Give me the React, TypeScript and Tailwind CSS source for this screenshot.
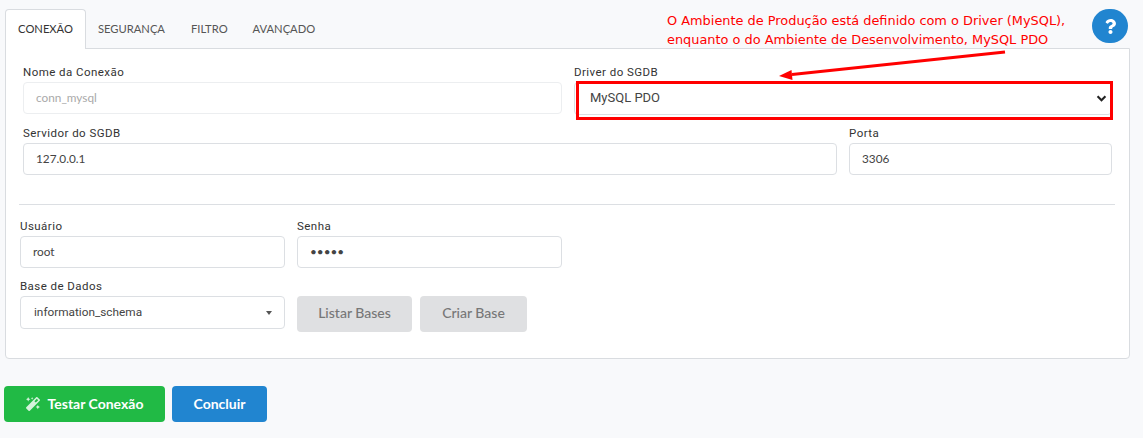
import React from 'react';
import { FaMagic, FaQuestion } from 'react-icons/fa';

const Field: React.FC<{ label: string; className?: string; children: React.ReactNode }> = ({ label, className, children }) => (
  <div className={className}>
    <label className="block h-[19px] font-['Roboto',sans-serif] text-[11.5px] leading-[19px] font-normal tracking-[0.45px] text-[#333]">{label}</label>
    {children}
  </div>
);

const inputClass = "block w-full h-[32px] px-[12px] pb-[2px] bg-white border border-[#dcdfe3] rounded-[4px] font-['Lato',sans-serif] text-[11.8px] text-[#444] outline-none";

const App: React.FC = () => {
  return (
    <div className="relative w-[1143px] h-[438px] overflow-hidden bg-[#f8f9fb] pt-[9px] pl-[5px]">
      {/* tabs */}
      <div className="flex h-[40px] font-['Lato',sans-serif] text-[11.2px] text-[#555]">
        <div className="relative z-10 w-[81px] h-[40px] flex items-center justify-center bg-white border border-b-0 border-[#d9dce0] rounded-t-[4px] text-[#333]">CONEXÃO</div>
        <div className="ml-[12px] flex items-center">SEGURANÇA</div>
        <div className="ml-[26px] flex items-center">FILTRO</div>
        <div className="ml-[25px] flex items-center">AVANÇADO</div>
      </div>

      {/* panel */}
      <div className="w-[1125px] h-[311px] -mt-px bg-white border border-[#d9dce0] rounded-b-[4px] pt-[14px] pl-[17px] pr-[17px]">
        <div className="flex gap-[12px]">
          <Field label="Nome da Conexão" className="w-[539px]">
            <input readOnly value="conn_mysql" className={`${inputClass} border-[#eceef0] text-[#aaa]`} />
          </Field>
          <Field label="Driver do SGDB" className="w-[538px]">
            <div className="flex items-center justify-between h-[33px] pl-[15px] pr-[4px] pb-[1px] bg-white border border-[#dcdfe3] rounded-[4px] font-['Roboto',sans-serif] text-[13px] text-[#444]">
              MySQL PDO
              <svg width="11" height="7" viewBox="0 0 12 8" fill="none" stroke="#222" strokeWidth="2.4"><path d="M1.5 1.5 6 6l4.5-4.5" /></svg>
            </div>
          </Field>
        </div>
        <div className="flex gap-[12px] mt-[9px]">
          <Field label="Servidor do SGDB" className="w-[814px]">
            <input readOnly value="127.0.0.1" className={inputClass} />
          </Field>
          <Field label="Porta" className="w-[263px]">
            <input readOnly value="3306" className={inputClass} />
          </Field>
        </div>

        <div className="h-px w-[1096px] bg-[#dcdfe3] -ml-[4px] mt-[29px]" />

        <div className="flex gap-[12px] mt-[12px] -ml-[3px]">
          <Field label="Usuário" className="w-[265px]">
            <input readOnly value="root" className={inputClass} />
          </Field>
          <Field label="Senha" className="w-[265px]">
            <input readOnly type="password" value="12345" className={inputClass} />
          </Field>
        </div>
        <div className="flex gap-[12px] mt-[9px] -ml-[3px]">
          <Field label="Base de Dados" className="w-[265px]">
            <div className="flex items-center justify-between h-[33px] pl-[13px] pr-[12px] bg-white border border-[#dcdfe3] rounded-[4px] font-['Roboto',sans-serif] text-[11.8px] text-[#444]">
              information_schema
              <span className="w-0 h-0 border-x-[3.5px] border-x-transparent border-t-[4px] border-t-[#555]" />
            </div>
          </Field>
          <div className="flex gap-[8px] pt-[19px]">
            <button className="w-[115px] h-[36px] pb-[3px] bg-[#dfe0e2] rounded-[4px] font-['Lato',sans-serif] text-[14px] font-medium text-[#777]">Listar Bases</button>
            <button className="w-[107px] h-[36px] pb-[3px] bg-[#dfe0e2] rounded-[4px] font-['Lato',sans-serif] text-[14px] font-medium text-[#777]">Criar Base</button>
          </div>
        </div>
      </div>

      {/* actions */}
      <div className="flex gap-[7px] mt-[27px] -ml-px font-['Lato',sans-serif] text-[14px] font-bold text-white">
        <button className="flex items-center justify-center gap-[8px] w-[161px] h-[36px] pb-[1px] bg-[#21ba45] rounded-[4px]">
          <FaMagic size={14} className="text-[#d5f3dc]" />
          Testar Conexão
        </button>
        <button className="w-[95px] h-[36px] pb-[1px] bg-[#2185d0] rounded-[4px]">Concluir</button>
      </div>

      {/* help button */}
      <div className="absolute left-[1092px] top-[9px] w-[36px] h-[34px] rounded-full bg-[#2185d0] flex items-center justify-center text-white">
        <FaQuestion size={15} />
      </div>

      {/* annotation over the screenshot */}
      <div className="absolute left-[667px] top-[11px] font-['DejaVu_Sans',sans-serif] text-[12.9px] leading-[19px] text-[#ff0000] whitespace-nowrap">
        <p>O Ambiente de Produção está definido com o Driver (MySQL),</p>
        <p>enquanto o do Ambiente de Desenvolvimento, MySQL PDO</p>
      </div>
      <div className="absolute left-[576px] top-[81px] w-[537px] h-[39px] border-[3px] border-[#ff0000]" />
      <svg className="absolute left-[770px] top-[45px]" width="245" height="36" viewBox="0 0 245 36">
        <path d="M235 7 22 29.6" stroke="#ff0000" strokeWidth="3" />
        <path d="M9 31 21.5 25 22.5 35z" fill="#ff0000" />
      </svg>
    </div>
  );
};

export default App;
